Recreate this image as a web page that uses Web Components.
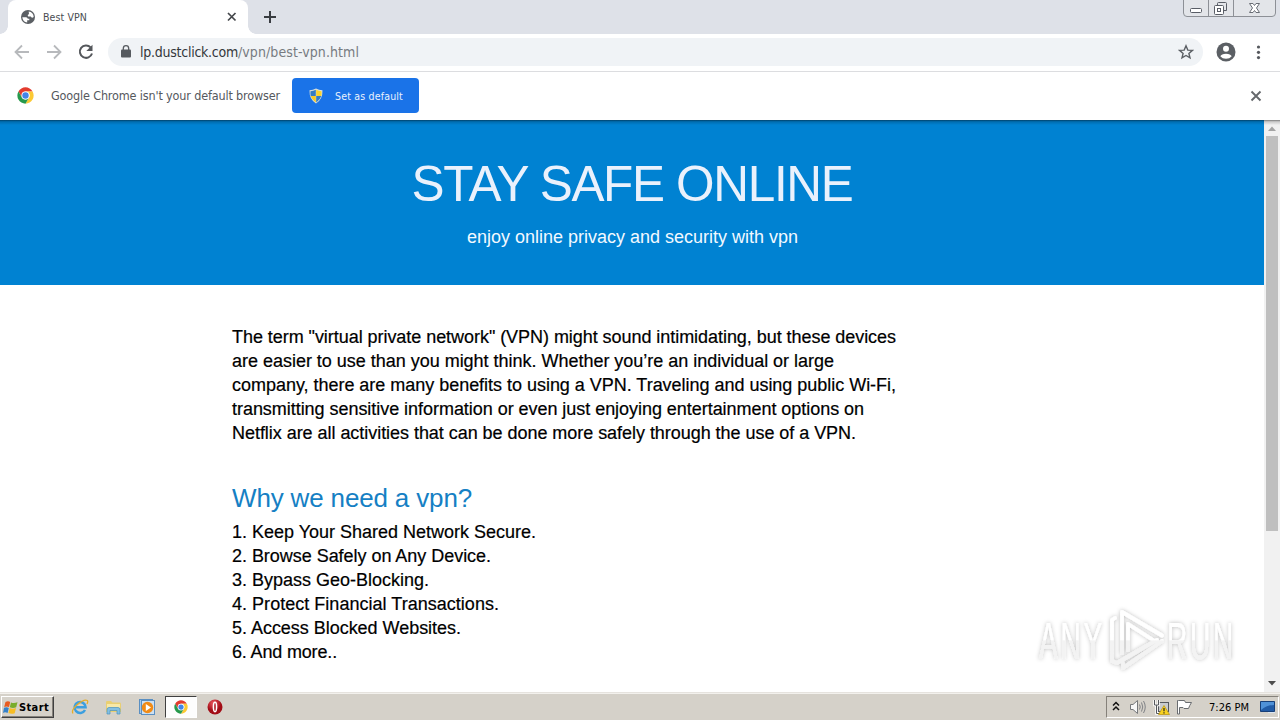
<!DOCTYPE html>
<html lang="en">
<head>
<meta charset="utf-8">
<title>Best VPN</title>
<style>
html,body{margin:0;width:1280px;height:720px;overflow:hidden;background:#fff}
</style>
</head>
<body>
<desktop-screen></desktop-screen>
<script>
const define = (name, html, ready) => {
  const t = document.createElement('template');
  t.innerHTML = html;
  customElements.define(name, class extends HTMLElement {
    connectedCallback() {
      if (this.shadowRoot) return;
      this.attachShadow({mode: 'open'}).append(t.content.cloneNode(true));
      if (ready) ready(this);
    }
  });
};

/* One line of text, tracked so that it fills the width given in w. */
define('fit-text', `<style>:host{display:inline-block;white-space:pre;flex:none}</style><span><slot></slot></span>`, el => {
  const w = +el.getAttribute('w');
  if (!w) return;
  const span = el.shadowRoot.querySelector('span');
  const n = el.textContent.length;
  const natural = span.getBoundingClientRect().width;
  span.style.letterSpacing = ((w - natural) / n) + 'px';
  el.style.width = w + 'px';
});

define('chrome-logo', `<style>:host{display:block;width:17px;height:17px;flex:none}svg{display:block;width:100%;height:100%}</style>
<svg viewBox="0 0 48 48"><circle cx="24" cy="24" r="23" fill="#fff"/>
<path d="M4.1 12.5A23 23 0 0 1 43.9 12.5H24A11.5 11.5 0 0 0 14 18.2V29.7Z" fill="#e33b2e"/>
<path d="M43.9 12.5A23 23 0 0 1 24 47L34 29.7A11.5 11.5 0 0 0 24 12.5Z" fill="#fcc934"/>
<path d="M24 47A23 23 0 0 1 4.1 12.5L14 29.7A11.5 11.5 0 0 0 34 29.7Z" fill="#26994c"/>
<circle cx="24" cy="24" r="11.500" fill="#fff"/><circle cx="24" cy="24" r="9" fill="#4285e8"/></svg>`);

define('window-controls', `<style>:host{display:block;width:94px;height:17px}svg{display:block}</style>
<svg width="94" height="17" fill="none"><path d="M.5 0V13Q.5 16.500 4 16.500H89Q92.500 16.500 92.500 13V0" fill="#e3e5e9" stroke="#8d9096"/>
<path d="M25.500 0V16M50.500 0V16" stroke="#8d9096"/>
<rect x="7.500" y="8.500" width="11" height="4" rx="1" fill="#fff" stroke="#595d66"/>
<path d="M34.500 5V3.500Q34.500 2.500 35.500 2.500H42.500Q43.500 2.500 43.500 3.500V10.500H41" stroke="#595d66"/>
<rect x="31.500" y="5.500" width="9" height="9" rx="1" fill="#fff" stroke="#595d66"/><rect x="34.500" y="8.500" width="3" height="3" stroke="#595d66"/>
<path d="M66.500 3.500H70L71.500 5.500L73 3.500H76.500L73.500 8L76.500 12.500H73L71.500 10.500L70 12.500H66.500L69.500 8Z" fill="#fff" stroke="#696d75"/></svg>`);

define('tab-strip', `<style>
:host{display:flex;height:34px;background:#dee1e8;font:10.500px "DejaVu Sans Condensed","DejaVu Sans",sans-serif;color:#4a4d52}
.tab{position:relative;box-sizing:border-box;margin-left:8px;width:240px;height:34px;background:#fff;border-radius:8px 8px 0 0;display:flex;align-items:center;padding:0 10px 0 13px}
.tab:before,.tab:after{content:"";position:absolute;bottom:0;width:8px;height:8px}
.tab:before{left:-8px;background:radial-gradient(circle at 0 0,transparent 7.5px,#fff 8px)}
.tab:after{right:-8px;background:radial-gradient(circle at 100% 0,transparent 7.5px,#fff 8px)}
fit-text{margin:0 auto 0 8px}
.plus{margin:10px 0 0 15px}window-controls{margin-left:auto;margin-right:3px}svg{flex:none;display:block}
</style>
<div class="tab"><svg width="14" height="14" viewBox="0 0 14 14"><circle cx="7" cy="7" r="7" fill="#5b5f64"/><path d="M1.300 7.300H5.200Q6.500 7.700 6.800 8.800H8.300V10.200H6.200V12.600Q1.800 12 1.300 7.300ZM7.700 1.500Q12.300 2 12.700 7Q10.500 8.500 9.800 6.500H7.200Q6 4.500 8 4.200Z" fill="#fff"/></svg>
<fit-text w="44">Best VPN</fit-text>
<svg width="13" height="12" viewBox="0 0 13 12"><path d="M3 2L10.500 9.500M10.500 2L3 9.500" stroke="#44474b" stroke-width="1.700"/></svg></div>
<svg class="plus" width="14" height="14"><path d="M7 1V13M1 7H13" stroke="#393c41" stroke-width="2"/></svg>
<window-controls></window-controls>`);

define('tool-bar', `<style>
:host{box-sizing:border-box;display:flex;align-items:center;height:38px;background:#fff;border-bottom:1px solid #dcdde0;padding:0 12px 2px 14px}
svg{display:block;flex:none}
.pill{box-sizing:border-box;width:1095px;height:28px;border-radius:14px;background:#f0f3f6;display:flex;align-items:center;margin-left:14px;padding:0 9px 0 13px;font:14px "DejaVu Sans Condensed","DejaVu Sans",sans-serif;color:#777b80}
.host{margin-left:9px;color:#34373b}.star{margin-left:auto}
.f{margin-left:16px}.r{margin-left:16px}.user{margin-left:13px}.dots{margin-left:20px}
</style>
<svg width="16" height="16"><path d="M15 8H2M8 1.500L1.500 8L8 14.500" fill="none" stroke="#b7b9bc" stroke-width="1.800"/></svg>
<svg class="f" width="16" height="16"><path d="M1 8H14M8 1.500L14.500 8L8 14.500" fill="none" stroke="#b7b9bc" stroke-width="1.800"/></svg>
<svg class="r" width="16" height="16"><path d="M12.600 3.400A6.200 6.200 0 1 0 14 9.500" fill="none" stroke="#54575b" stroke-width="2"/><path d="M14.500 .8V7H8.300Z" fill="#54575b"/></svg>
<div class="pill"><svg width="10" height="13"><rect x="0" y="4.500" width="10" height="8" rx="1" fill="#565a5f"/><path d="M2.300 5V3.400A2.700 2.700 0 0 1 7.700 3.400V5" fill="none" stroke="#565a5f" stroke-width="1.300"/></svg>
<fit-text class="host" w="98">lp.dustclick.com</fit-text><fit-text w="121">/vpn/best-vpn.html</fit-text>
<svg class="star" width="16" height="16" viewBox="0 0 16 16"><path d="M8 1.800L9.800 6.100L14.400 6.400L10.900 9.400L12 13.900L8 11.500L4 13.900L5.100 9.400L1.600 6.400L6.200 6.100Z" fill="none" stroke="#5b5f64" stroke-width="1.400"/></svg></div>
<svg class="user" width="20" height="20"><circle cx="10" cy="10" r="9.500" fill="#5b5f64"/><circle cx="10" cy="6.800" r="3" fill="#fff"/><path d="M4.300 14.200Q5.500 11.700 10 11.700T15.700 14.200Q13.700 16.800 10 16.800T4.300 14.200Z" fill="#fff"/></svg>
<svg class="dots" width="5" height="16"><g fill="#55585d"><circle cx="2.500" cy="3" r="1.600"/><circle cx="2.500" cy="8.300" r="1.600"/><circle cx="2.500" cy="13.600" r="1.600"/></g></svg>`);

define('info-bar', `<style>
:host{box-sizing:border-box;display:flex;align-items:center;height:48px;background:#fff;padding:0 18px 1px 17px;font:12.500px "DejaVu Sans Condensed","DejaVu Sans",sans-serif;color:#55585d}
svg{display:block;flex:none}.msg{margin-left:17px}
button{all:unset;box-sizing:border-box;display:flex;align-items:center;width:127px;height:35px;border-radius:4px;background:#1a73e8;margin-left:12px;padding-left:17px;color:#e9f1fd;font:10.500px "DejaVu Sans Condensed","DejaVu Sans",sans-serif}
button fit-text{margin-left:12px}.x{margin-left:auto}
</style>
<chrome-logo></chrome-logo><fit-text class="msg" w="229">Google Chrome isn't your default browser</fit-text>
<button><svg width="14" height="16" viewBox="0 0 14 16"><path d="M7 .5Q10 2.300 13.500 2.300Q13.800 11.500 7 15.500Q.2 11.500 .5 2.300Q4 2.300 7 .5Z" fill="#d9e0dc"/><path d="M6.800 1.800V8H1.700Q1.300 5.500 1.500 3.200Q4.500 3.200 6.800 1.800Z" fill="#357cc4"/><path d="M7.200 1.800Q9.500 3.200 12.500 3.200Q12.700 5.500 12.300 8H7.200Z" fill="#fbd32d"/><path d="M1.700 8H6.800V14.400Q2.600 11.600 1.700 8Z" fill="#f8ca25"/><path d="M7.200 8H12.300Q11.400 11.600 7.200 14.400Z" fill="#357cc4"/></svg><fit-text w="68">Set as default</fit-text></button>
<svg class="x" width="12" height="12"><path d="M1.500 1.500L10.500 10.500M10.500 1.500L1.500 10.500" stroke="#65686c" stroke-width="1.900"/></svg>`);

define('page-hero', `<style>
:host{box-sizing:border-box;display:flex;flex-direction:column;align-items:center;height:165px;background:#0082d2;color:#eaf1fc;font-family:"Liberation Sans",Arial,sans-serif;padding-top:35px}
h1{margin:0;font-size:49.500px;font-weight:400;line-height:58px;height:58px}
p{margin:0 0 0 1px;font-size:18px;line-height:24px;padding-top:12px;color:#f2f9ff}
</style><h1><fit-text w="441">STAY SAFE ONLINE</fit-text></h1><p><fit-text w="331">enjoy online privacy and security with vpn</fit-text></p>`);

define('page-article', `<style>
:host{display:block;padding:40px 0 0 232px;font:18px/24px "Liberation Sans",Arial,sans-serif;color:#000}
.l{height:24px;-webkit-text-stroke:.2px #000}h2{margin:37px 0 6px;font-size:26px;line-height:32px;height:32px;font-weight:400;color:#1580c4}
</style>
<div class="l"><fit-text w="664">The term "virtual private network" (VPN) might sound intimidating, but these devices</fit-text></div>
<div class="l"><fit-text w="602">are easier to use than you might think. Whether you’re an individual or large</fit-text></div>
<div class="l"><fit-text w="664">company, there are many benefits to using a VPN. Traveling and using public Wi-Fi,</fit-text></div>
<div class="l"><fit-text w="632">transmitting sensitive information or even just enjoying entertainment options on</fit-text></div>
<div class="l"><fit-text w="624">Netflix are all activities that can be done more safely through the use of a VPN.</fit-text></div>
<h2><fit-text w="240">Why we need a vpn?</fit-text></h2>
<div class="l"><fit-text w="304">1. Keep Your Shared Network Secure.</fit-text></div>
<div class="l"><fit-text w="259">2. Browse Safely on Any Device.</fit-text></div>
<div class="l"><fit-text w="197">3. Bypass Geo-Blocking.</fit-text></div>
<div class="l"><fit-text w="267">4. Protect Financial Transactions.</fit-text></div>
<div class="l"><fit-text w="229">5. Access Blocked Websites.</fit-text></div>
<div class="l"><fit-text w="105">6. And more..</fit-text></div>`);

define('scroll-bar', `<style>
:host{display:flex;flex-direction:column;align-items:center;width:16px;background:#f1f1f1}
svg{display:block}.thumb{width:12px;height:395px;background:#bfbfbf}.end{margin-top:auto}
</style><svg width="16" height="16"><path d="M4 11L8 6.500L12 11Z" fill="#a3a3a3"/></svg><div class="thumb"></div><svg class="end" width="16" height="17"><path d="M4 6L8 10.500L12 6Z" fill="#4c4c4c"/></svg>`);

define('water-mark', `<style>:host{display:block;width:220px;height:80px}svg{display:block;overflow:visible}
text{font-family:"Liberation Sans",Arial,sans-serif;font-size:52px;letter-spacing:5px}</style>
<svg width="220" height="80" viewBox="1030 600 220 80">
<defs><linearGradient id="g" x1="0" y1="600" x2="0" y2="680" gradientUnits="userSpaceOnUse"><stop offset=".5" stop-color="#fff"/><stop offset=".51" stop-color="#f3f3f3"/></linearGradient>
<linearGradient id="t" x1="0" y1="-59" x2="0" y2="21" gradientUnits="userSpaceOnUse"><stop offset=".5" stop-color="#fff"/><stop offset=".51" stop-color="#f3f3f3"/></linearGradient>
<filter id="s" x="-20%" y="-20%" width="140%" height="140%"><feDropShadow dx="0" dy="0" stdDeviation="2" flood-color="#000" flood-opacity=".27"/></filter></defs>
<g filter="url(#s)"><g fill="url(#t)">
<text transform="translate(1039 659) scale(.54 1)">ANY</text>
<text transform="translate(1167 659) scale(.54 1)">RUN</text></g>
<g fill="none" stroke="url(#g)" stroke-width="3.800" stroke-linejoin="round" stroke-linecap="round">
<path d="M1122 653V612L1162 635.500M1128 650V624L1153 640M1162 641L1123 668V663M1115 618L1112 620V661L1117 663L1157 640"/></g></g></svg>`);

define('web-view', `<style>
:host{position:relative;display:grid;grid-template-columns:1264px 16px;height:572px;background:#fff;overflow:hidden}
.shade{position:absolute;left:0;right:0;top:0;height:5px;background:linear-gradient(rgba(0,0,0,.5),rgba(0,0,0,.16) 35%,transparent)}
water-mark{position:absolute;left:1030px;top:480px}
</style><main><page-hero></page-hero><page-article></page-article></main><scroll-bar></scroll-bar><div class="shade"></div><water-mark></water-mark>`);

define('start-button', `<style>:host{box-sizing:border-box;display:flex;align-items:center;width:53px;height:22px;background:#d6d2ca;border:1px solid;border-color:#fff #404040 #404040 #fff;box-shadow:inset -1px -1px #85817a;padding-left:1px;font:bold 11px "DejaVu Sans Condensed","DejaVu Sans",sans-serif;color:#000}fit-text{margin-left:1px}svg{flex:none}</style>
<svg width="15" height="15" viewBox="0 0 15 15"><path d="M2.500 2Q5 .5 7.200 2L6 7Q3.500 5.800 1.200 7Z" fill="#e85b20"/><path d="M8 2.400Q11 3.700 14.500 2.200L13.200 7.200Q10 8.600 6.800 7.200Z" fill="#79ad2c"/><path d="M1 7.800Q3.500 6.600 5.800 7.900L4.600 12.900Q2 11.700 0 12.900Z" fill="#3581c9"/><path d="M6.600 8.100Q10 9.400 13 8L11.700 13.200Q8.500 14.500 5.400 13.100Z" fill="#f7bd25"/></svg><fit-text w="30">Start</fit-text>`);

define('task-bar', `<style>
:host{box-sizing:border-box;display:flex;align-items:center;height:28px;background:#d5d1c9;border-top:1px solid #e6e3de;box-shadow:inset 0 1px #f3f1ed;padding:1px 1px 0 1px}
svg{display:block;flex:none}
.active{box-sizing:border-box;width:32px;height:22px;background:#fdfdfd;border:1px solid;border-color:#404040 #fff #fff #404040;display:grid;place-items:center;margin-left:9px}
chrome-logo{width:14px;height:14px}
.ie{margin-left:17px}.ex{margin-left:16px}.wm{margin-left:17px}.op{margin-left:10px}
.tray{box-sizing:border-box;margin-left:auto;width:173px;height:22px;border:1px solid;border-color:#85817a #fff #fff #85817a;display:flex;align-items:center;padding-left:5px;font:11px "DejaVu Sans Condensed","Noto Sans",sans-serif;color:#000}
</style>
<start-button></start-button>
<svg class="ie" width="18" height="18" viewBox="0 0 18 18"><path d="M14 12A5.500 5.500 0 1 1 14.600 9.300H5" fill="none" stroke="#3c9fdf" stroke-width="2.500"/><path d="M2 15.500C-1 11 12 .5 16.300 2.500Q17.300 3.300 16 6" fill="none" stroke="#e6ad28" stroke-width="1.300"/></svg>
<svg class="ex" width="17" height="17"><path d="M1 3Q1 2 2 2H6L7.500 3.500H15Q16 3.500 16 5V13H1Z" fill="#e9cf72"/><rect x="2" y="5" width="13" height="5" fill="#f7e8a8"/><path d="M2 15V10.500Q2 8.500 4 8.500H13Q15 8.500 15 10.500V15H12V11.500H5V15Z" fill="#83bfe2" stroke="#4a92bd" stroke-width=".7"/></svg>
<svg class="wm" width="17" height="17"><rect x=".5" y=".5" width="13" height="14" fill="#a7c8e6" stroke="#5a8fc2"/><rect x="2.500" y="1.500" width="13" height="14" fill="#cde0f2" stroke="#5a8fc2"/><circle cx="8.500" cy="8.500" r="5.700" fill="#f18b16"/><path d="M6.800 5V12L12 8.500Z" fill="#fff"/></svg>
<div class="active"><chrome-logo></chrome-logo></div>
<svg class="op" width="16" height="16"><defs><radialGradient id="r" cx=".4" cy=".25"><stop stop-color="#ec5960"/><stop offset="1" stop-color="#a20c16"/></radialGradient></defs><circle cx="8" cy="8" r="7.500" fill="url(#r)"/><ellipse cx="8" cy="8" rx="1.600" ry="4.700" fill="#b5262d" stroke="#fff" stroke-width="1.500"/></svg>
<div class="tray">
<svg width="8" height="12"><path d="M1 4.500L4 1.500L7 4.500M1 9L4 6L7 9" fill="none" stroke="#111" stroke-width="1.500"/></svg>
<svg style="margin-left:9px" width="18" height="16"><path d="M1.500 5.500H4L8.500 1.500V14.500L4 10.500H1.500Z" fill="#f7f7f7" stroke="#76787b"/><path d="M10.500 5.500Q12 8 10.500 10.500M12.500 3.500Q15 8 12.500 12.500M14.500 2Q18 8 14.500 14" fill="none" stroke="#808286"/></svg>
<svg style="margin-left:6px" width="17" height="17"><rect x="5.500" y="3.500" width="10" height="9" fill="#c9cbce" stroke="#55585c"/><path d="M1.500 1V6H5.500V1M3.500 6V14.500H9" fill="none" stroke="#fff" stroke-width="2.500"/><path d="M1.500 1V6H5.500V1M3.500 6V14.500H9" fill="none" stroke="#55585c"/><path d="M11 6.500L16.500 15.500H5.500Z" fill="#f9d21f" stroke="#bd9816" stroke-width=".8"/><path d="M11 9V12.300M11 13.200V14.500" stroke="#222" stroke-width="1.200"/></svg>
<svg style="margin-left:6px" width="17" height="16"><path d="M2.500 1.500H8.500L9.500 3.500H15.500Q13.500 6.500 12.500 9.500H8L7 8.500H3.500V15H1.500V1.500Z" fill="#fff" stroke="#696c70"/></svg>
<fit-text style="margin-left:16px" w="40">7:26 PM</fit-text>
<svg style="margin-left:11px" width="17" height="14"><path d="M.5 1.500H14.500V11.500H.5Z" fill="#215ba6" stroke="#173f78"/><path d="M1 2H14V5Q7 5 1 10Z" fill="#4f91d7"/><path d="M8 12.500H15" stroke="#dbe6f2"/></svg>
</div>`);

define('desktop-screen', `<style>:host{display:grid;grid-template-rows:34px 38px 48px 572px 28px;width:1280px;height:720px;background:#fff}</style>
<tab-strip></tab-strip><tool-bar></tool-bar><info-bar></info-bar><web-view></web-view><task-bar></task-bar>`);
</script>
</body>
</html>
